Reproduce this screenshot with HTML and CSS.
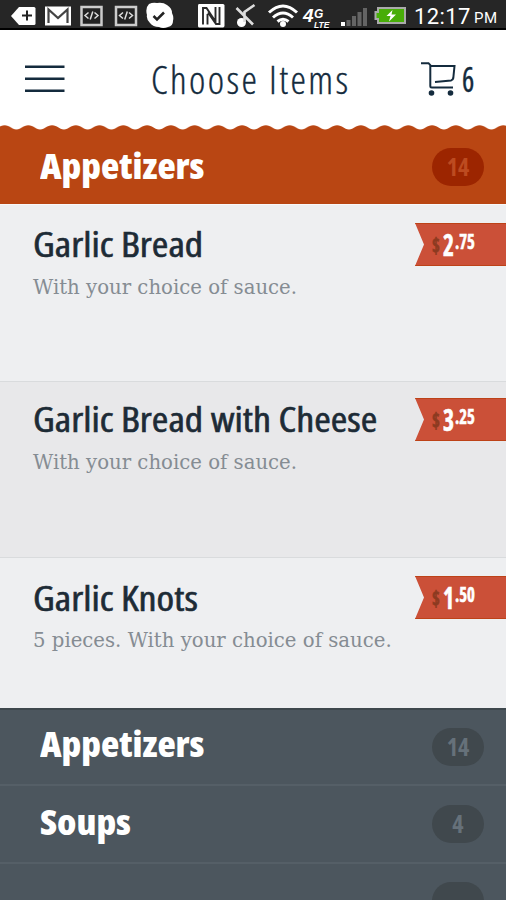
FILE: index.html
```html
<!DOCTYPE html>
<html lang="en">
<head>
<meta charset="utf-8">
<title>Choose Items</title>
<link rel="stylesheet" href="styles.css">
</head>
<body>
<div class="status">
  <svg class="status-icons" width="412" height="30" viewBox="0 0 412 30" aria-hidden="true">
    <path d="M11 16l8-9h15q1.500 0 1.500 1.500v15q0 1.500-1.500 1.500H19z" fill="#fff"/>
    <path d="M22 15.500h10M27 10.500v10" stroke="#222" stroke-width="2"/>
    <path d="M45 6.500h26v19H45z" fill="#fff"/>
    <path d="M48.500 23V9.500l9.500 8.500 9.500-8.500V23" fill="none" stroke="#444" stroke-width="2.200"/>
    <g id="code"><path d="M81.500 7h20v18h-20z" fill="#222" stroke="#ccc" stroke-width="2.500"/>
    <path d="M88.500 12.500L85 15.500l3.500 3M94.500 12.500l3.500 3-3.500 3M92.800 11.500l-2.600 8" fill="none" stroke="#ddd" stroke-width="1.500"/></g>
    <use href="#code" x="34.500"/>
    <path d="M149 4q4-2 8-1 6-1 10 2 5 3 5 8 2 4 1 8 0 5-5 6-5 2-9 0-6 0-9-4-4-4-3-8-2-7 2-11z" fill="#fff"/>
    <path d="M153.500 16l3.500 3.500 7-7" fill="none" stroke="#222" stroke-width="2.500"/>
    <path d="M199 4h24q1.500 0 1.500 1.500v20q0 2-1.500 2h-24q-1 0-1-2v-20q0-1.500 1-1.500z" fill="#fff"/>
    <path d="M203 24.500V8h3.500l9 13.500V11M207.500 24.500V14M215.500 7v4M219.500 7v17h-3.500l-8-11.500" fill="none" stroke="#2a2a2a" stroke-width="1.900"/>
    <circle cx="241.500" cy="22.500" r="4.500" fill="#fff"/>
    <path d="M244.500 22V12L254.500 5M236.500 8L253 24.500" stroke="#ddd" stroke-width="2.600" fill="none"/>
    <path d="M269 12.500q14-13 28 0M273 17.500q10-9 20 0M277.500 21.500q5.500-4.500 11 0" fill="none" stroke="#fff" stroke-width="3"/>
    <circle cx="283" cy="24" r="3" fill="#fff"/>
    <text class="net-4" x="303" y="22">4</text><text class="net-g" x="314" y="18">G</text><text class="net-lte" x="314" y="27.500">LTE</text>
    <path d="M341 22h4v4h-4z" fill="#fff"/>
    <path d="M346.500 20h4v6h-4zM352 16h4v10h-4zM357.500 12h4v14h-4zM363 8h4v18h-4z" fill="#646464"/>
    <path d="M378 8h27v15h-27v-4h-2.500v-7h2.500z" fill="#48ad08" stroke="#aaa" stroke-width="2"/>
    <path d="M392.500 10l-6 6h4l-1.500 5.500 7-7h-4.500z" fill="#fff"/>
  </svg>
  <span class="clock">12:17</span><span class="ampm">PM</span>
</div>
<header class="header">
  <svg class="menu" width="40" height="28" viewBox="0 0 40 28" aria-hidden="true"><path d="M0 1.700h39.500M0 13.700h39.500M0 25.700h39.500" stroke="#142b3d" stroke-width="2.500"/></svg>
  <h1 class="title">Choose Items</h1>
  <svg class="cart" width="36" height="36" viewBox="0 0 36 36" fill="none" stroke="#142b3d" stroke-width="2" aria-hidden="true"><path d="M0 2.200h7.500l1.800 2v20.800q0 1.500 1.500 1.500H32M9 5h24.500l-1.200 12q-.3 2-2.300 2.400L14 21"/><circle cx="10.500" cy="32" r="2.800" fill="#142b3d" stroke="none"/><circle cx="29.500" cy="32" r="2.800" fill="#142b3d" stroke="none"/></svg>
  <span class="cart-count">6</span>
</header>
<svg class="scallop" width="506" height="5" viewBox="0 0 506 5" aria-hidden="true">
  <defs><pattern id="wave" x="-7.300" width="23.750" height="5" patternUnits="userSpaceOnUse"><path d="M0 5V4.500C5 4.500 6.500.3 11.900.3S18.700 4.500 23.750 4.500V5z" fill="#b94613"/></pattern></defs>
  <rect width="506" height="5" fill="url(#wave)"/>
</svg>
<section class="bar bar-active"><h2><span>Appetizers</span></h2><span class="count">14</span></section>
<main>
  <article class="item first"><div class="info"><h3><span>Garlic Bread</span></h3><p>With your choice of sauce.</p></div>
    <div class="price"><span class="cur">$</span><span class="num">2</span><span class="cents">.75</span></div></article>
  <article class="item second"><div class="info"><h3><span>Garlic Bread with Cheese</span></h3><p>With your choice of sauce.</p></div>
    <div class="price"><span class="cur">$</span><span class="num">3</span><span class="cents">.25</span></div></article>
  <article class="item third"><div class="info"><h3><span>Garlic Knots</span></h3><p>5 pieces. With your choice of sauce.</p></div>
    <div class="price"><span class="cur">$</span><span class="num">1</span><span class="cents">.50</span></div></article>
</main>
<nav>
  <div class="bar dark top"><h2><span>Appetizers</span></h2><span class="count">14</span></div>
  <div class="bar dark"><h2><span>Soups</span></h2><span class="count">4</span></div>
  <div class="bar dark last"><span class="count"></span></div>
</nav>
</body>
</html>
```
FILE: styles.css
```css
* { box-sizing: border-box; }
html, body { margin: 0; height: 900px; overflow: hidden; }
body { width: 506px; background: #fff; font-family: "Open Sans", "Noto Sans", sans-serif; font-stretch: 75%; color: #142b3d; display: flex; flex-direction: column; }
h1, h2, h3, p { margin: 0; white-space: nowrap; }
h2 span, h3 span { display: inline-block; transform-origin: left center; }
.status { flex: none; height: 30px; background: #262626; border-bottom: 2px solid #000; display: flex; color: #fff; overflow: hidden; }
.status-icons { flex: none; }
.net-4, .net-g, .net-lte { font-family: "Liberation Sans", sans-serif; font-weight: bold; font-style: italic; fill: #fff; }
.net-4 { font-size: 19px; }
.net-g { font-size: 12px; }
.net-lte { font-size: 8.5px; }
.clock { font: 22px/33px Roboto, sans-serif; margin-left: 2px; width: 60px; letter-spacing: .4px; white-space: nowrap; }
.ampm { font: 15px/36px Roboto, sans-serif; letter-spacing: .5px; }
.header { flex: none; height: 95px; display: flex; align-items: center; padding: 3px 0 0 25px; }
.menu { flex: none; }
.title { margin-left: 86px; width: 270px; font-size: 39px; line-height: 50px; font-weight: 300; letter-spacing: 2.4px; -webkit-text-stroke: .35px #142b3d; }
.cart { flex: none; }
.cart-count { margin-left: 5px; font-size: 34px; line-height: 40px; transform: scaleX(.85); transform-origin: left; -webkit-text-stroke: .4px #142b3d; }
.scallop { flex: none; display: block; }
.bar { flex: none; display: flex; align-items: center; justify-content: space-between; padding: 0 22px 0 40px; }
.bar h2 { color: #fff; font-size: 36px; line-height: 48px; font-weight: 800; padding-bottom: 3px; }
.bar h2 span { transform: scaleX(1.045); }
.bar-active { height: 74px; background: #b94613; }
.count { width: 52px; height: 38px; border-radius: 19px; background: #9c2500; color: #bd4b20; font-size: 24px; line-height: 37px; font-weight: 700; text-align: center; }
.item { display: flex; justify-content: space-between; padding-left: 33px; background: #eeeff1; }
.first { height: 177px; padding-top: 18px; border-top: 1px solid #f8f8f9; }
.second { height: 176px; padding-top: 16px; background: #e8e8ea; border-top: 1px solid #d9dbdd; }
.third { height: 151px; padding-top: 18px; border-top: 1px solid #d9dbdd; }
.info h3 { font-size: 35px; line-height: 44px; font-weight: 400; color: #1d2b36; -webkit-text-stroke: .6px #1d2b36; }
.info h3 span { transform: scaleX(1.145); }
.first h3, .second h3 { margin-top: -1px; }
.info p { font-family: "DejaVu Serif", serif; font-stretch: normal; font-size: 19.7px; line-height: 28px; color: #858c93; margin-top: 7px; }
.first p, .second p { margin-top: 8px; }
.price { flex: none; width: 91px; height: 43px; background: #cb5038; border-top: 1px solid #bd4218; border-bottom: 1px solid #bd4218; clip-path: polygon(0 0, 100% 0, 100% 100%, 0 100%, 9px 50%); color: #fff; display: flex; align-items: flex-start; padding-left: 17px; font-weight: 700; }
.price span { flex: none; transform: scaleX(.76); transform-origin: left center; -webkit-text-stroke: .6px currentColor; }
.cur { color: #8c3a20; width: 11px; font-size: 22px; line-height: 41px; }
.num { width: 12px; font-size: 31px; line-height: 40px; }
.cents { font-size: 22px; line-height: 32px; }
nav { background: #4c565e; height: 192px; flex: none; }
.dark { height: 78px; border-bottom: 2px solid #555f67; }
.top { border-top: 2px solid #3e484d; }
.top h2 { padding-bottom: 6px; }
.dark:nth-child(2) h2 { padding-bottom: 5px; }
.dark .count { background: #40484d; color: #66717a; }
.last { border: 0; height: 36px; align-items: flex-start; padding-top: 18px; justify-content: flex-end; overflow: hidden; }
```
